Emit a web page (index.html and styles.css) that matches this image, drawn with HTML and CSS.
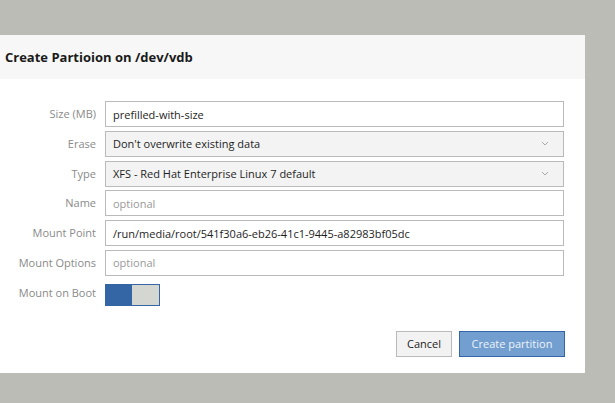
FILE: index.html
```html
<!DOCTYPE html>
<html>
<head>
<meta charset="utf-8">
<link rel="stylesheet" href="styles.css">
</head>
<body>
<div class="dialog">
  <div class="header"><h1 class="title">Create Partioion on /dev/vdb</h1></div>
  <div class="body">
    <div class="form">
      <label class="lbl">Size (MB)</label>
      <div class="field">prefilled-with-size</div>
      <label class="lbl">Erase</label>
      <div class="field select">Don't overwrite existing data<svg class="chev" width="8" height="5" viewBox="0 0 8 5"><path d="M1 1 L4 4 L7 1" fill="none" stroke="#a8a8a8" stroke-width="1"/></svg></div>
      <label class="lbl">Type</label>
      <div class="field select">XFS - Red Hat Enterprise Linux 7 default<svg class="chev" width="8" height="5" viewBox="0 0 8 5"><path d="M1 1 L4 4 L7 1" fill="none" stroke="#a8a8a8" stroke-width="1"/></svg></div>
      <label class="lbl">Name</label>
      <div class="field placeholder">optional</div>
      <label class="lbl">Mount Point</label>
      <div class="field">/run/media/root/541f30a6-eb26-41c1-9445-a82983bf05dc</div>
      <label class="lbl">Mount Options</label>
      <div class="field placeholder">optional</div>
      <label class="lbl">Mount on Boot</label>
      <div class="switch"><span class="on"></span><span class="off"></span></div>
    </div>
  </div>
  <div class="footer">
    <button class="btn btn-default">Cancel</button>
    <button class="btn btn-primary">Create partition</button>
  </div>
</div>
</body>
</html>
```
FILE: styles.css
```css
html, body {
  margin: 0;
  padding: 0;
}
body {
  background: #babcb5;
  font-family: "Open Sans", "Noto Sans", sans-serif;
  width: 615px;
  height: 403px;
  overflow: hidden;
  padding-top: 35px;
  box-sizing: border-box;
}
.dialog {
  width: 585px;
  background: #fff;
}
.header {
  height: 44px;
  background: #f7f7f7;
  display: flex;
  align-items: center;
  padding-left: 5px;
}
.title {
  margin: 0;
  font-size: 13px;
  font-weight: 700;
  color: #1a1a1a;
}
.body {
  padding: 22px 0 0 0;
}
.form {
  display: grid;
  grid-template-columns: 96px 459px;
  grid-auto-rows: 26px;
  column-gap: 9px;
  row-gap: 3.8px;
  align-items: center;
}
.lbl {
  text-align: right;
  font-size: 11px;
  line-height: 14px;
  color: #8a8a8a;
}
.field {
  height: 26px;
  box-sizing: border-box;
  border: 1px solid #bababa;
  padding: 0 7px;
  font-size: 11px;
  color: #1e1e1e;
  display: flex;
  align-items: center;
  background: #fff;
}
.select {
  background: #f3f3f3;
  justify-content: space-between;
  padding-right: 14px;
}
.placeholder {
  color: #999;
}
.switch {
  align-self: end;
  width: 55px;
  height: 22px;
  box-sizing: border-box;
  border: 1px solid #3465a4;
  display: flex;
}
.switch .on {
  flex: 0 0 26px;
  background: #3465a4;
}
.switch .off {
  flex: 1;
  background: #d4d6d1;
}
.footer {
  display: flex;
  justify-content: flex-end;
  gap: 7px;
  padding: 25px 20px 16px 0;
}
.btn {
  height: 26px;
  box-sizing: border-box;
  font-family: "Open Sans", "Noto Sans", sans-serif;
  font-size: 11px;
  padding: 0;
  white-space: nowrap;
  cursor: pointer;
}
.btn-default {
  width: 56px;
  background: #f2f2f2;
  border: 1px solid #bababa;
  color: #222;
}
.btn-primary {
  width: 106px;
  background: #729fcf;
  border: 1px solid #3465a4;
  color: #eef3fa;
}
```
